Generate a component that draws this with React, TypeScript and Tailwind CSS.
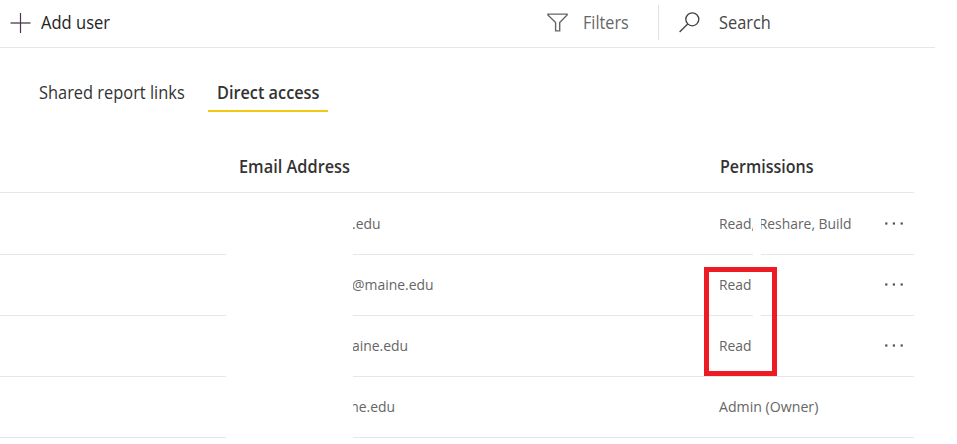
const rows = [
  { id: 'r1', email: '.edu', permissions: 'Read, Reshare, Build', menu: true, height: 'h-[62px] pb-px', pad: 'pl-[352px]', scale: 'scale-x-[0.925]' },
  { id: 'r2', email: '@maine.edu', permissions: 'Read', menu: true, height: 'h-[61px] pb-[2px]', pad: 'pl-[352px]', scale: 'scale-x-[0.925]' },
  { id: 'r3', email: 'maine.edu', permissions: 'Read', menu: true, height: 'h-[61px] pb-[2px]', pad: 'pl-[339px]', scale: 'scale-x-[0.925]' },
  { id: 'r4', email: 'maine.edu', permissions: 'Admin (Owner)', menu: false, height: 'h-[61px] pb-[2px]', pad: 'pl-[326px]', scale: 'scale-x-[0.943]' },
];

function PlusIcon() {
  return (
    <svg width="21" height="21" viewBox="0 0 21 21" className="shrink-0" fill="none">
      <path d="M0.5 11H20.5" stroke="#858585" strokeWidth="2" />
      <path d="M10.5 1V21" stroke="#4b3550" strokeWidth="1.2" />
    </svg>
  );
}

function FunnelIcon() {
  return (
    <svg width="21" height="19" viewBox="0 0 21 19" className="shrink-0" fill="none" stroke="#666" strokeWidth="1.4">
      <path d="M0.9 1.1H20.1V2L12.7 9.6V17.9H8.6V9.6L0.9 2Z" />
    </svg>
  );
}

function SearchIcon() {
  return (
    <svg width="21" height="21" viewBox="0 0 21 21" className="shrink-0" fill="none" stroke="#444" strokeWidth="1.35">
      <circle cx="13.3" cy="7.3" r="6.5" />
      <path d="M8.7 11.9L0.6 20" />
    </svg>
  );
}

function MoreIcon() {
  return (
    <svg width="19" height="3" viewBox="0 0 19 3" fill="#505050" className="ml-px">
      <rect x="0.2" y="0.4" width="2.2" height="2.2" />
      <rect x="7.8" y="0.4" width="2.2" height="2.2" />
      <rect x="15.6" y="0.4" width="2.2" height="2.2" />
    </svg>
  );
}

export default function App() {
  return (
    <div className="relative h-[444px] w-[957px] overflow-hidden bg-white font-['Open_Sans','Noto_Sans',sans-serif] whitespace-nowrap text-[#333]">
      <header className="flex h-12 w-[935px] items-center border-b border-[#e6e6e6] pb-[3px] pl-[10px]">
        <div className="flex w-[537px] items-center">
          <PlusIcon />
          <span className="ml-[10px] inline-block origin-left scale-x-[0.945] text-[17.5px] leading-6 text-[#252423]">Add user</span>
        </div>
        <div className="flex w-[111px] items-center text-[#666]">
          <FunnelIcon />
          <span className="ml-[15px] inline-block origin-left scale-x-[0.925] text-[17.5px] leading-6">Filters</span>
        </div>
        <div className="mt-[1px] h-[35px] w-px bg-[#e1e1e1]" />
        <div className="ml-5 flex items-center">
          <SearchIcon />
          <span className="ml-[19px] inline-block origin-left scale-x-[0.935] text-[17.5px] leading-6 text-[#444]">Search</span>
        </div>
      </header>

      <nav className="flex h-16 items-end pl-[39px] text-[17.5px] leading-6">
        <div className="h-[32px] w-[169px]">
          <span className="inline-block origin-left scale-x-[0.937]">Shared report links</span>
        </div>
        <div className="h-[32px] w-[120px] border-b-2 border-[#f2c811] pl-[9px] font-semibold">
          <span className="inline-block origin-left scale-x-[0.93]">Direct access</span>
        </div>
      </nav>

      <main className="w-[914px]">
        <div className="flex h-[81px] items-end border-b border-[#e6e6e6] pb-[14px] text-[17.5px] leading-6 font-semibold">
          <div className="w-[720px] pl-[239px]">
            <span className="inline-block origin-left scale-x-[0.933]">Email Address</span>
          </div>
          <span className="inline-block origin-left scale-x-[0.915]">Permissions</span>
        </div>
        {rows.map((row) => (
          <div key={row.id} className={`flex items-center border-b border-[#e6e6e6] text-[15px] leading-5 text-[#666] ${row.height}`}>
            <div className={`w-[719px] shrink-0 ${row.pad}`}>
              <span className="inline-block origin-left scale-x-[0.93]">{row.email}</span>
            </div>
            <div className="w-[165px] shrink-0">
              <span className={`inline-block origin-left ${row.scale}`}>{row.permissions}</span>
            </div>
            {row.menu && <MoreIcon />}
          </div>
        ))}
      </main>

      <div className="absolute top-[200px] left-[226px] h-[244px] w-[127px] bg-white" />
      <div className="absolute top-[200px] left-[753px] h-[130px] w-[8px] bg-white" />
      <div className="absolute top-[267px] left-[704px] h-[109px] w-[73px] border-[5px] border-[#ed1c24]" />
    </div>
  );
}
